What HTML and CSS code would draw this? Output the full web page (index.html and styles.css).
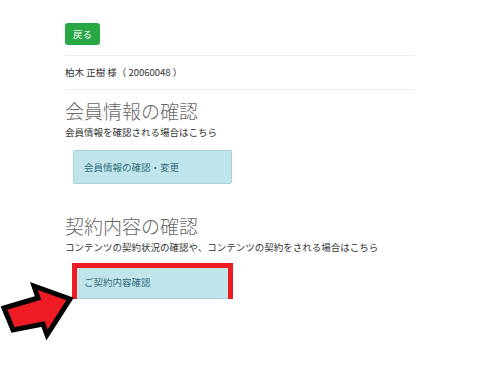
FILE: index.html
```html
<!DOCTYPE html>
<html lang="ja">
<head>
    <meta charset="UTF-8">
    <title>会員メニュー</title>
    <link rel="stylesheet" href="styles.css">
</head>
<body>
    <div class="container">
        <a class="btn-back" href="#">戻る</a>
        <div class="customer">柏木 正樹 様（ 20060048 ）</div>

        <div class="section">
            <h2>会員情報の確認</h2>
            <p class="lead">会員情報を確認される場合はこちら</p>
            <a class="menu-box" href="#">会員情報の確認・変更</a>
        </div>

        <div class="section second">
            <h2>契約内容の確認</h2>
            <p class="lead">コンテンツの契約状況の確認や、コンテンツの契約をされる場合はこちら</p>
            <a class="menu-box" href="#">ご契約内容確認<span class="highlight"></span></a>
        </div>
    </div>

    <svg class="arrow" width="80" height="70" viewBox="0 0 80 70">
        <polygon points="4,30 38,20 34,8 70,21 47,57 43,46 13,52" fill="#ed1c24" stroke="#000" stroke-width="5" stroke-linejoin="miter"/>
    </svg>
</body>
</html>
```

FILE: styles.css
```css
body {
    margin: 0;
    font-family: "Noto Sans CJK JP", "Noto Sans", sans-serif;
    font-size: 9.5px;
    color: #333;
    background: #fff;
}
.container {
    width: 350px;
    margin-left: 65px;
    padding-top: 23px;
}
.btn-back {
    display: inline-block;
    height: 22px;
    line-height: 22px;
    padding: 0 8px;
    background-color: #28a745;
    color: #fff;
    border-radius: 3px;
    text-decoration: none;
}
.customer {
    margin-top: 10px;
    padding: 10px 0;
    line-height: 13px;
    border-top: 1px solid #eee;
    border-bottom: 1px solid #eee;
}
.section h2 {
    margin: 9px 0 2px;
    font-size: 19px;
    line-height: 24px;
    font-weight: 300;
    color: #666;
}
.section.second h2 {
    margin-top: 30px;
}
.lead {
    margin: 0;
    line-height: 14px;
    font-size: 9.5px;
}
.menu-box {
    position: relative;
    display: block;
    width: 137px;
    margin: 11px 0 0 8px;
    padding: 10px 10px;
    line-height: 12px;
    background-color: #bfe5eb;
    border: 1px solid #a5d3dc;
    border-radius: 2px;
    color: #2f6b7c;
    text-decoration: none;
}
.highlight {
    position: absolute;
    left: -2px;
    top: -3px;
    right: -2px;
    bottom: -6px;
    border: 5px solid #ed1c24;
}
.arrow {
    position: absolute;
    left: 0;
    top: 278px;
}
```
